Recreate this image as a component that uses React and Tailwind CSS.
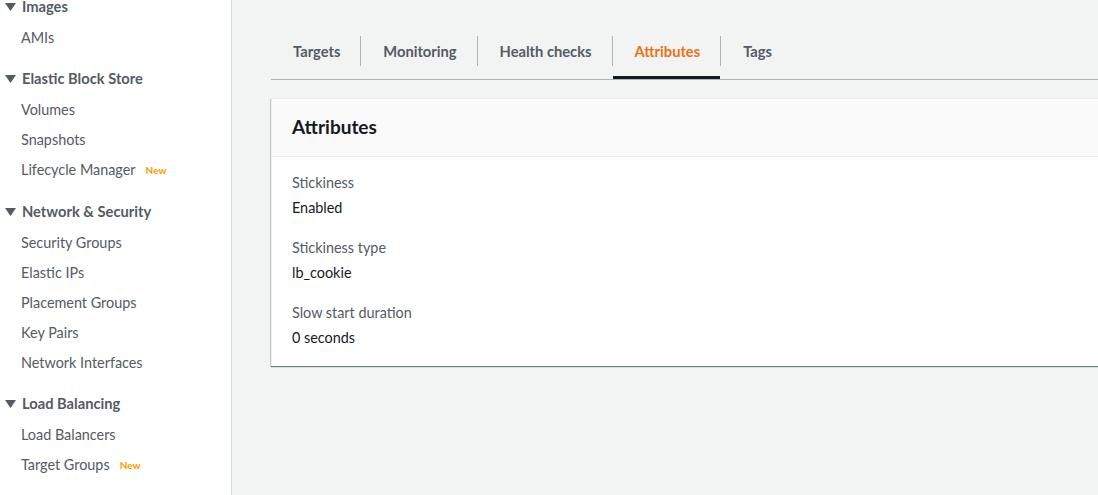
import React from "react";

const groups = [
  { title: "Images", gap: "", items: [{ label: "AMIs" }] },
  {
    title: "Elastic Block Store",
    gap: "mt-[10px]",
    items: [
      { label: "Volumes" },
      { label: "Snapshots" },
      { label: "Lifecycle Manager", isNew: true },
    ],
  },
  {
    title: "Network & Security",
    gap: "mt-[11px]",
    items: [
      { label: "Security Groups" },
      { label: "Elastic IPs" },
      { label: "Placement Groups" },
      { label: "Key Pairs" },
      { label: "Network Interfaces" },
    ],
  },
  {
    title: "Load Balancing",
    gap: "mt-[10px]",
    items: [
      { label: "Load Balancers" },
      { label: "Target Groups", isNew: true },
    ],
  },
];

const tabs = ["Targets", "Monitoring", "Health checks", "Attributes", "Tags"];

const attributes = [
  { label: "Stickiness", value: "Enabled" },
  { label: "Stickiness type", value: "lb_cookie" },
  { label: "Slow start duration", value: "0 seconds" },
];

function Caret() {
  return (
    <svg width="11" height="8" viewBox="0 0 11 8" className="shrink-0">
      <polygon points="0,0 11,0 5.5,8" fill="#545b64" />
    </svg>
  );
}

function Sidebar() {
  return (
    <aside className="w-[232px] shrink-0 h-full bg-white border-r border-[#d5dbdb] overflow-hidden">
      <div className="mt-[-9px]">
        {groups.map((group) => (
          <div key={group.title} className={group.gap}>
            <div className="h-[31px] flex items-center gap-[6px] pl-[5px] text-[14.7px] font-bold text-[#545b64]">
              <Caret />
              <span>{group.title}</span>
            </div>
            <div className="pt-[1px]">
              {group.items.map((item) => (
                <div
                  key={item.label}
                  className="h-[30px] flex items-center pl-[21px] text-[#545b64]"
                >
                  <span>{item.label}</span>
                  {item.isNew && (
                    <span className="ml-[10px] text-[10px] font-bold text-[#ff9900]">
                      New
                    </span>
                  )}
                </div>
              ))}
            </div>
          </div>
        ))}
      </div>
    </aside>
  );
}

function Tabs() {
  return (
    <div className="flex border-b border-[#aab7b8]">
      {tabs.map((tab, i) => {
        const active = tab === "Attributes";
        return (
          <React.Fragment key={tab}>
            {i > 0 && <div className="w-px h-[30px] bg-[#aab7b8]" />}
            <div
              className={`h-[43px] ${
                active ? "border-b-[3px] border-[#16191f]" : ""
              }`}
            >
              <div
                className={`h-[30px] flex items-center pl-[22px] pr-[20px] text-[14.7px] font-bold ${
                  active ? "text-[#ec7211]" : "text-[#545b64]"
                }`}
              >
                {tab}
              </div>
            </div>
          </React.Fragment>
        );
      })}
    </div>
  );
}

function AttributesCard() {
  return (
    <div className="mt-[18px] bg-white border-l border-t border-[#eaeded] shadow-[0_1px_1px_0_rgba(0,28,36,0.5),-1px_1px_1px_0_rgba(0,28,36,0.1)]">
      <div className="h-[58px] flex items-center px-[20px] bg-[#fafafa] border-b border-[#eaeded]">
        <h2 className="text-[19px] font-bold text-[#16191f]">Attributes</h2>
      </div>
      <div className="px-[20px] pt-[16px] pb-[18px]">
        {attributes.map((attr, i) => (
          <div key={attr.label} className={i > 0 ? "mt-[20px]" : ""}>
            <div className="leading-[20px] text-[#545b64]">{attr.label}</div>
            <div className="mt-[5px] leading-[20px] text-[#16191f]">
              {attr.value}
            </div>
          </div>
        ))}
      </div>
    </div>
  );
}

export default function App() {
  return (
    <div
      className="flex w-[1098px] h-[495px] overflow-hidden bg-[#f2f3f3] text-[14.4px]"
      style={{ fontFamily: "Lato, 'Open Sans', sans-serif" }}
    >
      <Sidebar />
      <main className="flex-1 pl-[39px] pt-[36px] overflow-hidden">
        <div className="w-[900px]">
          <Tabs />
          <AttributesCard />
        </div>
      </main>
    </div>
  );
}
